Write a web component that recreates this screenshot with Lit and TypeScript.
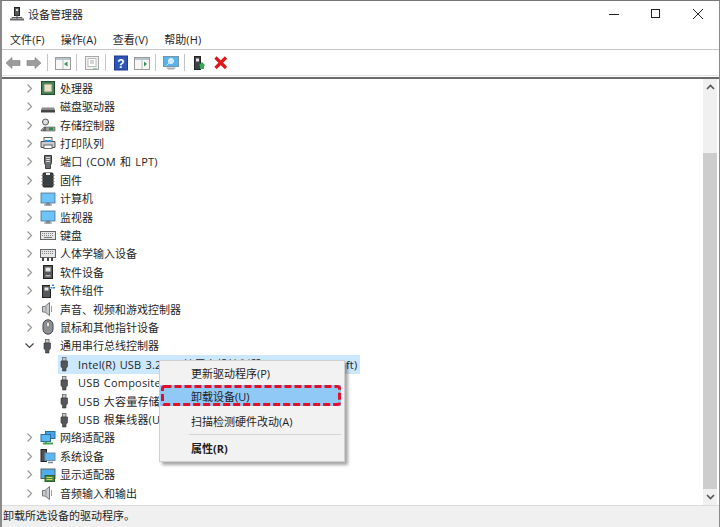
import { css, html, svg, LitElement } from "lit";
import { customElement } from "lit/decorators.js";
import { classMap } from "lit/directives/class-map.js";

type Row = { label: string, icon: string, child?: boolean, open?: boolean, selected?: boolean };

const rows: Row[] = [
  { label: "处理器", icon: "cpu" },
  { label: "磁盘驱动器", icon: "disk" },
  { label: "存储控制器", icon: "storage" },
  { label: "打印队列", icon: "printer" },
  { label: "端口 (COM 和 LPT)", icon: "port" },
  { label: "固件", icon: "chip" },
  { label: "计算机", icon: "monitor" },
  { label: "监视器", icon: "monitor" },
  { label: "键盘", icon: "keyboard" },
  { label: "人体学输入设备", icon: "hid" },
  { label: "软件设备", icon: "soft" },
  { label: "软件组件", icon: "softc" },
  { label: "声音、视频和游戏控制器", icon: "sound" },
  { label: "鼠标和其他指针设备", icon: "mouse" },
  { label: "通用串行总线控制器", icon: "usb", open: true },
  { label: "Intel(R) USB 3.20 可扩展主机控制器 - 1.20 (Microsoft)", icon: "usb", child: true, selected: true },
  { label: "USB Composite Device", icon: "usb", child: true },
  { label: "USB 大容量存储设备", icon: "usb", child: true },
  { label: "USB 根集线器(USB 3.0)", icon: "usb", child: true },
  { label: "网络适配器", icon: "net" },
  { label: "系统设备", icon: "system" },
  { label: "显示适配器", icon: "display" },
  { label: "音频输入和输出", icon: "sound" },
];

const glyphs: Record<string, unknown> = {
  cpu: svg`<rect x="1.500" y="1.500" width="13" height="13" fill="#3f7f52" stroke="#1f4d2e"/><rect x="4" y="4" width="8" height="8" fill="#e6e3c8" stroke="#7c8a6a"/>`,
  disk: svg`<path d="M2 8.500h12l1 2v2.500H1v-2.500z" fill="#8a8a8a"/><rect x="1" y="11" width="14" height="2.500" fill="#444"/>`,
  storage: svg`<path d="M1 13l3-3h11v4H1z" fill="#9aa0a0" stroke="#555" stroke-width=".6"/><circle cx="5.500" cy="5" r="3" fill="#d9dfe2" stroke="#555"/><rect x="9" y="10.500" width="4" height="2.500" fill="#2f8a45"/><path d="M4 11h2M3 13h3" stroke="#333"/>`,
  printer: svg`<rect x="4" y="2.500" width="8" height="4" fill="#f4f4f4" stroke="#666"/><path d="M1 6.500h14v6H1z" fill="#c6ccd2" stroke="#555"/><rect x="5" y="5" width="6" height="2" fill="#2b8fd8"/><rect x="4" y="10" width="8" height="3.500" fill="#fff" stroke="#666"/>`,
  port: svg`<path d="M4.500 1.500h7v7l-1 3v3h-5v-3l-1-3z" fill="#6b6f73" stroke="#3a3a3a"/><path d="M6 3.500h4M6 5.500h4M6 7.500h4" stroke="#ddd"/>`,
  chip: svg`<rect x="3" y="1" width="10" height="14" rx="1" fill="#3a3f42" stroke="#222"/><path d="M1.500 3.500h2M1.500 6.500h2M1.500 9.500h2M1.500 12.500h2M12.500 3.500h2M12.500 6.500h2M12.500 9.500h2M12.500 12.500h2" stroke="#777"/><path d="M6 1h4v2H6z" fill="#eee"/>`,
  monitor: svg`<rect x="1" y="2" width="14" height="10" fill="#4eaef0" stroke="#6f8da6"/><rect x="2" y="3" width="12" height="8" fill="#6cc4f8"/><path d="M6 12.500h4v1.500H6zM4 14h8" stroke="#7b8790" fill="#9aa"/>`,
  keyboard: svg`<rect x=".5" y="4.500" width="15" height="8" fill="#e4e6e8" stroke="#666"/><path d="M2 6.500h12M2 8.500h12" stroke="#888" stroke-dasharray="1 1"/><path d="M4 10.500h8" stroke="#777"/>`,
  hid: svg`<rect x=".5" y="3.500" width="15" height="8" fill="#e4e6e8" stroke="#666"/><path d="M2 5.500h12M2 7.500h12" stroke="#888" stroke-dasharray="1 1"/><path d="M3 15v-3.500M8 15v-3.500M12 15v-3.500" stroke="#444" stroke-width="2"/>`,
  soft: svg`<rect x="3.500" y="1.500" width="9" height="13" fill="#55595c" stroke="#222"/><rect x="5.500" y="3.500" width="5" height="4" fill="#e7e7e7"/><rect x="5.500" y="11" width="5" height="1.500" fill="#bbb"/>`,
  softc: svg`<rect x="2.500" y="2.500" width="8" height="12" fill="#55595c" stroke="#222"/><rect x="4.500" y="4.500" width="4" height="3" fill="#e7e7e7"/><path d="M10 1h5v5h-5z" fill="#fff"/><path d="M12 1.500h2v1.500h-2zM10.500 4h2v1.500h-2zM13 4h2v1.500h-2z" fill="#2f86d6"/>`,
  sound: svg`<path d="M9.500 1.500v13L5 11H2.500V5.500H5z" fill="#c9cccf" stroke="#777"/><path d="M11.500 5v6" stroke="#999"/><path d="M6 5.500v5" stroke="#8a8f94"/>`,
  mouse: svg`<rect x="3" y=".8" width="10" height="14.400" rx="5" fill="#8d9094" stroke="#444"/><rect x="6.500" y="3" width="3" height="5" rx="1.500" fill="#e8e8e8" stroke="#555" stroke-width=".6"/>`,
  usb: svg`<rect x="5.500" y="1.500" width="3.500" height="3.500" fill="#c4c8cc" stroke="#666" stroke-width=".8"/><path d="M4 5h6.500v5.500L9 12.500v2.500H5.500v-2.500L4 10.500z" fill="#53575b" stroke="#333" stroke-width=".6"/>`,
  net: svg`<rect x="5.500" y="1.500" width="9.500" height="7" fill="#44a3ea" stroke="#2c6d9e"/><rect x="1" y="4.500" width="9.500" height="7" fill="#59b7f2" stroke="#2c6d9e"/><path d="M3 13.500h10" stroke="#3ca552" stroke-width="2"/><path d="M6 11.500v2" stroke="#3ca552" stroke-width="2"/>`,
  system: svg`<rect x="1" y="1.500" width="5.500" height="12" fill="#4b5156" stroke="#222"/><rect x="5" y="5" width="10" height="7.500" fill="#59b7f2" stroke="#6f8da6"/><path d="M8 14.500h5" stroke="#7b8790" stroke-width="1.500"/>`,
  display: svg`<rect x="1" y="2" width="14" height="9.500" fill="#4eaef0" stroke="#555e66"/><rect x="5" y="8.500" width="9.500" height="6" fill="#3f8a3f" stroke="#2f5f2f"/><path d="M6.500 10.500h6M6.500 12.500h6" stroke="#d8cf6a"/>`,
};

function icon(name: string) {
  return html`<svg class="ico" viewBox="0 0 16 16" width="16" height="16">${glyphs[name]}</svg>`;
}

const panel = (mark: unknown) => svg`<rect x=".5" y="2.500" width="15" height="12" fill="#f7f7f7" stroke="#9a9a9a"/><rect x="1" y="3" width="14" height="2" fill="#b7c4cf"/><path d="M8 5v9" stroke="#bbb"/>${mark}`;

const tools: (unknown | null)[] = [
  svg`<path d="M1 8l6-5.500V5.500h8v5H7v3z" fill="#9c9c9c" stroke="#7d7d7d" stroke-width=".6"/>`,
  svg`<path d="M15 8L9 2.500V5.500H1v5h8v3z" fill="#9c9c9c" stroke="#7d7d7d" stroke-width=".6"/>`,
  null,
  panel(svg`<path d="M12.500 6.500v5L9 9z" fill="#3f8f5a"/>`),
  null,
  svg`<rect x="1.500" y="1.500" width="13" height="13" fill="#f1f1f1" stroke="#a8a8a8"/><rect x="4" y="3.500" width="8" height="8" fill="#fff" stroke="#bbb"/><path d="M6 6h4M6 8h4" stroke="#aaa"/><path d="M9 14h4" stroke="#7fc08f" stroke-width="1.500"/>`,
  null,
  svg`<rect x="1.500" y="1" width="13" height="14" fill="#2f55b8" stroke="#1d3c8c"/><text x="8" y="12.500" text-anchor="middle" font-family="Liberation Sans" font-weight="700" font-size="12" fill="#fff">?</text>`,
  panel(svg`<path d="M10 6.500v5l3-2.500z" fill="#3f8f5a"/>`),
  null,
  svg`<rect x=".5" y="1.500" width="15" height="10" fill="#58b4ee" stroke="#7c93a5"/><path d="M3 12.500h10l-2 2H5z" fill="#a5adb3"/><circle cx="8" cy="6" r="2.500" fill="#cfeafa" stroke="#e8f5fc"/><path d="M6 8l-2.500 2.500" stroke="#d8e6ee"/>`,
  null,
  svg`<rect x="2.500" y="1.500" width="6" height="13" fill="#3d4347" stroke="#222"/><rect x="4" y="3.500" width="3" height="3" fill="#e5e5e5"/><path d="M10 7l3.500 3.500H12V14H8v-3.500H6.500z" fill="#35a853"/>`,
  svg`<path d="M2.500 2.500l10.500 10.500M13 2.500L2.500 13" stroke="#e0161c" stroke-width="3.200"/>`,
];

@customElement("app-root")
export class AppRoot extends LitElement {
  static styles = css`
    :host {
      display: block;
      width: 720px;
      height: 527px;
      font-family: "Open Sans", "Noto Sans CJK SC", sans-serif;
      font-size: 11px;
      color: #1f1f1f;
    }

    .window {
      position: relative;
      box-sizing: border-box;
      width: 720px;
      height: 527px;
      display: flex;
      flex-direction: column;
      background: #fff;
      border-top: 1px solid #777;
      border-left: 2px solid #8a8a8a;
      border-right: 1px solid #8a8a8a;
      overflow: hidden;
    }

    .title {
      height: 26px;
      flex: none;
      display: flex;
      align-items: center;
      padding: 0 0 0 7px;
      gap: 3px;
    }
    .title .name { flex: 1; }
    .controls { display: flex; align-items: center; gap: 30px; padding-right: 15px; }
    .controls svg { display: block; }

    .menu {
      height: 23px;
      flex: none;
      display: flex;
      align-items: center;
      gap: 16px;
      padding: 1px 0 0 8px;
      border-bottom: 1px solid #c8c8c8;
      box-sizing: border-box;
    }
    .menu span { letter-spacing: 0.1px; }

    .toolbar {
      height: 26px;
      flex: none;
      display: flex;
      align-items: center;
      border-bottom: 1px solid #e2e2e2;
      box-sizing: border-box;
    }
    .toolbar svg { display: block; margin: 0 2.5px; }
    .tool-sep { width: 1px; height: 17px; background: #c4c4c4; margin: 0 4.5px 0 2.5px; }

    .body {
      flex: 1;
      min-height: 0;
      display: flex;
      margin-top: 1px;
      border-top: 2px solid #6b6b6b;
    }

    .tree {
      flex: 1;
      min-width: 0;
      overflow: hidden;
    }
    .row {
      height: 18.42px;
      display: flex;
      align-items: center;
      white-space: nowrap;
      padding-left: 23px;
    }
    .row.child { padding-left: 55px; }
    .row .arrow { width: 9px; height: 9px; flex: none; margin-right: 6px; }
    .row .ico { flex: none; margin-right: 4px; }
    .row.child .ico { margin-right: 5px; }
    .label { padding-bottom: 1px; }
    .label.latin { letter-spacing: 0.2px; word-spacing: 1px; }
    .row.selected { position: relative; }
    .row.selected::before {
      content: "";
      position: absolute;
      left: 56px;
      top: 0;
      width: 302px;
      height: 18.42px;
      background: #cce8ff;
    }
    .row.selected > * { position: relative; }

    .scrollbar {
      width: 14px;
      flex: none;
      margin-right: 2px;
      background: #f0f0f0;
      display: flex;
      flex-direction: column;
      align-items: center;
    }
    .scrollbar svg { flex: none; margin: 5px 0; }
    .spacer { height: 58px; flex: none; }
    .thumb { align-self: stretch; flex: 1; background: #cdcdcd; }

    .status {
      height: 22px;
      flex: none;
      display: flex;
      align-items: center;
      padding: 0 0 3px 1px;
      box-sizing: border-box;
      background: #f0f0f0;
      border-top: 1px solid #dcdcdc;
    }

    .context {
      position: absolute;
      left: 157px;
      top: 359px;
      width: 186px;
      box-sizing: border-box;
      height: 102px;
      padding: 2px;
      background: #f2f2f2;
      border: 1px solid #d0d0d0;
      box-shadow: 3px 3px 3px rgba(0, 0, 0, 0.35);
    }
    .item { height: 20px; display: flex; align-items: center; padding-left: 29px; }
    .item.hot { position: relative; background: #90c8f6; margin: 2px 1px 0 -2px; padding-left: 31px; height: 21px; }
    .dash { position: absolute; left: 0; top: 0; }
    .item.gap { margin-top: 5px; }
    .item.bold { font-weight: 700; }
    .context hr { border: 0; border-top: 1px solid #d4d4d4; margin: 3px 1px 3px 27px; }
  `;

  protected render() {
    return html`
      <div class="window">
        <div class="title">
          <svg viewBox="0 0 16 16" width="16" height="16"><rect x="5.500" y="1.500" width="5" height="8" fill="#55595c" stroke="#222"/><rect x="7" y="3" width="2" height="2" fill="#ddd"/><path d="M1 12.500h14v2H1z" fill="#666"/><path d="M8 9v4M3 12.500v-1h10v1" stroke="#555" fill="none"/></svg>
          <span class="name">设备管理器</span>
          <div class="controls">
            <svg width="12" height="12" viewBox="0 0 12 12"><path d="M1 6.500h10" stroke="#222"/></svg>
            <svg width="12" height="12" viewBox="0 0 12 12"><rect x="1.500" y="1.500" width="8" height="8" fill="none" stroke="#222"/></svg>
            <svg width="12" height="12" viewBox="0 0 12 12"><path d="M1 1l10 10M11 1L1 11" stroke="#222"/></svg>
          </div>
        </div>
        <div class="menu">
          <span>文件(F)</span><span>操作(A)</span><span>查看(V)</span><span>帮助(H)</span>
        </div>
        <div class="toolbar">
          ${tools.map(t => t === null
            ? html`<div class="tool-sep"></div>`
            : html`<svg viewBox="0 0 16 16" width="16" height="16">${t}</svg>`)}
        </div>
        <div class="body">
          <div class="tree">
            ${rows.map(r => html`
              <div class=${classMap({ row: true, child: !!r.child, selected: !!r.selected })}>
                ${r.child ? null : html`
                  <svg class="arrow" viewBox="0 0 9 9">
                    ${r.open
                      ? svg`<path d="M.5 2.500l4 4 4-4" fill="none" stroke="#444" stroke-width="1.200"/>`
                      : svg`<path d="M2.500.5l4 4-4 4" fill="none" stroke="#999" stroke-width="1.200"/>`}
                  </svg>`}
                ${icon(r.icon)}
                <span class=${classMap({ label: true, latin: /[A-Za-z]/.test(r.label) })}>${r.label}</span>
              </div>
            `)}
          </div>
          <div class="scrollbar">
            <svg width="9" height="6" viewBox="0 0 9 6"><path d="M1 5l3.500-3.500L8 5" fill="none" stroke="#555" stroke-width="1.600"/></svg>
            <div class="spacer"></div>
            <div class="thumb"></div>
            <svg width="9" height="6" viewBox="0 0 9 6"><path d="M1 1l3.500 3.500L8 1" fill="none" stroke="#555" stroke-width="1.600"/></svg>
          </div>
        </div>
        <div class="status">卸载所选设备的驱动程序。</div>
        <div class="context">
          <div class="item">更新驱动程序(P)</div>
          <div class="item hot">
            卸载设备(U)
            <svg class="dash" width="181" height="21"><rect x="2.500" y="1.500" width="177" height="18" rx="2" fill="none" stroke="#e0102a" stroke-width="3" stroke-dasharray="7 3"/></svg>
          </div>
          <div class="item gap">扫描检测硬件改动(A)</div>
          <hr />
          <div class="item bold">属性(R)</div>
        </div>
      </div>
    `;
  }
}
